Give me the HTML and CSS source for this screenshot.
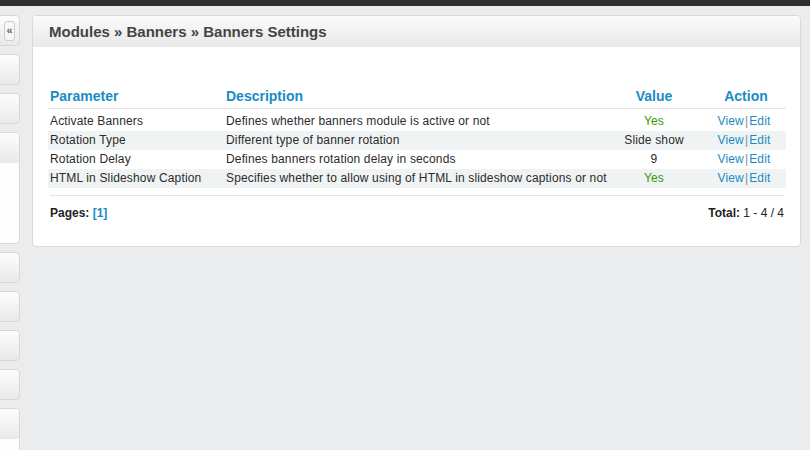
FILE: index.html
```html
<!DOCTYPE html>
<html>
<head>
<meta charset="utf-8">
<link rel="stylesheet" href="styles.css">
</head>
<body>
<div class="topbar"></div>
<div class="layout">
  <aside class="sidebar">
    <div class="spanel first"><span class="collapse">«</span></div>
    <div class="spanel"></div>
    <div class="spanel"></div>
    <div class="spanel tall"><div class="shead"></div></div>
    <div class="spanel"></div>
    <div class="spanel"></div>
    <div class="spanel"></div>
    <div class="spanel"></div>
    <div class="spanel last"><div class="shead"></div></div>
  </aside>
  <main class="panel">
    <div class="panel-head">Modules » Banners » Banners Settings</div>
    <div class="panel-body">
      <table class="grid">
        <colgroup>
          <col class="c1"><col class="c2"><col class="c3"><col class="c4">
        </colgroup>
        <thead>
          <tr><th>Parameter</th><th>Description</th><th class="center">Value</th><th class="center act">Action</th></tr>
        </thead>
        <tbody>
          <tr class="first"><td>Activate Banners</td><td>Defines whether banners module is active or not</td><td class="center yes">Yes</td><td class="center"><a>View</a><span class="sep">|</span><a>Edit</a></td></tr>
          <tr class="alt"><td>Rotation Type</td><td>Different type of banner rotation</td><td class="center">Slide show</td><td class="center"><a>View</a><span class="sep">|</span><a>Edit</a></td></tr>
          <tr><td>Rotation Delay</td><td>Defines banners rotation delay in seconds</td><td class="center">9</td><td class="center"><a>View</a><span class="sep">|</span><a>Edit</a></td></tr>
          <tr class="alt"><td>HTML in Slideshow Caption</td><td>Specifies whether to allow using of HTML in slideshow captions or not</td><td class="center yes">Yes</td><td class="center"><a>View</a><span class="sep">|</span><a>Edit</a></td></tr>
        </tbody>
      </table>
      <div class="footer">
        <div><b>Pages:</b> <a class="page">[1]</a></div>
        <div><b>Total:</b> 1 - 4 / 4</div>
      </div>
    </div>
  </main>
</div>
</body>
</html>
```
FILE: styles.css
```css
html, body {
  margin: 0;
  padding: 0;
  background: #ebeced;
  font-family: "Liberation Sans", Arial, sans-serif;
  font-size: 12px;
  color: #2b2b2b;
  overflow: hidden;
  height: 450px;
}
.topbar {
  height: 6px;
  background: #2e2e2e;
}
.layout {
  display: flex;
  align-items: flex-start;
  padding-top: 9px;
  height: 435px;
  overflow: hidden;
}
.sidebar {
  width: 21px;
  display: flex;
  flex-direction: column;
  gap: 8px;
  flex: none;
}
.spanel {
  margin-left: -12px;
  width: 30px;
  height: 29px;
  border: 1px solid #d8d8d8;
  border-radius: 4px;
  background: linear-gradient(#fdfdfd, #e9e9e9);
  position: relative;
  flex: none;
}
.spanel.tall {
  height: 110px;
  background: #fdfdfd;
  overflow: hidden;
}
.spanel.last {
  height: 60px;
  background: #fdfdfd;
  overflow: hidden;
}
.shead {
  height: 30px;
  background: linear-gradient(#fdfdfd, #e9e9e9);
}
.collapse {
  position: absolute;
  left: 15px;
  top: 5px;
  width: 9px;
  height: 18px;
  border: 1px solid #cfcfcf;
  border-radius: 3px;
  background: #f7f7f7;
  color: #5a6870;
  font-size: 11px;
  font-weight: bold;
  line-height: 17px;
  text-align: center;
}
.panel {
  margin-left: 11px;
  width: 767px;
  height: 230px;
  background: #fff;
  border: 1px solid #d9d9d9;
  border-radius: 4px;
  overflow: hidden;
}
.panel-head {
  height: 31px;
  line-height: 32px;
  padding-left: 16px;
  font-size: 15px;
  font-weight: bold;
  color: #444;
  background: linear-gradient(#fafafa, #e9e9e9);
}
.panel-body {
  padding: 39px 14px 0 15px;
}
.grid {
  width: 738px;
  border-collapse: separate;
  border-spacing: 0;
  table-layout: fixed;
}
.c1 { width: 176px; }
.c2 { width: 382px; }
.c3 { width: 96px; }
.c4 { width: 84px; }
.grid th {
  text-align: left;
  color: #1a8cc4;
  font-size: 14px;
  font-weight: bold;
  height: 20px;
  line-height: 20px;
  padding: 0 2px 2px;
  border-bottom: 1px solid #e3e3e3;
}
.grid th.act {
  padding-left: 6px;
}
.grid td {
  height: 19px;
  padding: 0 2px;
  white-space: nowrap;
  line-height: 19px;
  letter-spacing: 0.15px;
}
.grid tr.first td {
  padding-top: 3px;
}
.grid tr.alt td {
  background: #eff3f4;
}
.grid .center {
  text-align: center;
}
.grid .yes {
  color: #339900;
}
.grid a {
  color: #1a8cc4;
}
.sep {
  color: #8a8a8a;
  margin: 0 1px;
}
.footer {
  margin-top: 7px;
  width: 734px;
  border-top: 1px solid #e3e3e3;
  margin-left: 2px;
  display: flex;
  justify-content: space-between;
  padding-top: 10px;
  font-size: 12px;
  color: #222;
}
.page {
  color: #1a8cc4;
  font-weight: bold;
}
```
